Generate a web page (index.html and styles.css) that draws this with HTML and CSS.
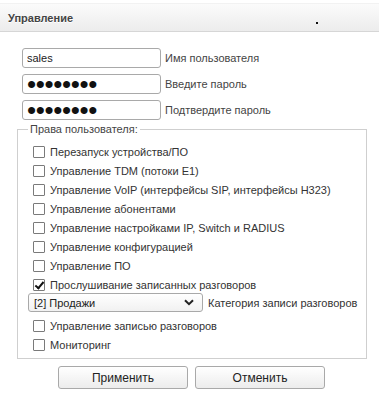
FILE: index.html
```html
<html>
  <head>
    <link rel="stylesheet" href="styles.css">
    <title>Управление</title>
  </head>
  <body>
    <div class="header">
      <span class="title">Управление</span>
      <span class="dot"></span>
    </div>
    <form class="form">
      <div class="field">
        <input class="text" type="text" value="sales">
        <label>Имя пользователя</label>
      </div>
      <div class="field">
        <input class="text" type="password" value="12345678">
        <label>Введите пароль</label>
      </div>
      <div class="field">
        <input class="text" type="password" value="12345678">
        <label>Подтвердите пароль</label>
      </div>

      <fieldset class="rights">
        <legend>Права пользователя:</legend>
        <label class="check"><input type="checkbox"> Перезапуск устройства/ПО</label>
        <label class="check"><input type="checkbox"> Управление TDM (потоки E1)</label>
        <label class="check"><input type="checkbox"> Управление VoIP (интерфейсы SIP, интерфейсы H323)</label>
        <label class="check"><input type="checkbox"> Управление абонентами</label>
        <label class="check"><input type="checkbox"> Управление настройками IP, Switch и RADIUS</label>
        <label class="check"><input type="checkbox"> Управление конфигурацией</label>
        <label class="check"><input type="checkbox"> Управление ПО</label>
        <label class="check"><input type="checkbox" checked> Прослушивание записанных разговоров</label>
        <div class="select-row">
          <span class="select-wrap">
            <select class="select">
              <option>[2] Продажи</option>
              <option>[1] Общая</option>
            </select>
            <svg class="chevron" width="10" height="7" viewBox="0 0 10 7">
              <path d="M1 1.2 L5 5.2 L9 1.2" fill="none" stroke="#222" stroke-width="2"/>
            </svg>
          </span>
          <span class="select-label">Категория записи разговоров</span>
        </div>
        <label class="check"><input type="checkbox"> Управление записью разговоров</label>
        <label class="check"><input type="checkbox"> Мониторинг</label>
      </fieldset>

      <div class="buttons">
        <button type="submit" class="btn">Применить</button>
        <button type="button" class="btn">Отменить</button>
      </div>
    </form>
  </body>
</html>
```

FILE: styles.css
```css
body {
  margin: 0;
  font-family: "Liberation Sans", Arial, sans-serif;
  font-size: 11px;
  color: #333;
}

.header {
  margin-top: 3px;
  height: 27px;
  display: flex;
  align-items: center;
  padding-left: 8px;
  background: linear-gradient(#fbfbfb, #ececec);
  border-top: 1px solid #f2f2f2;
  border-bottom: 1px solid #d6d6d6;
}
.title {
  font-weight: bold;
  color: #444;
  text-shadow: 0 1px 0 #fff;
}
.dot {
  width: 2px;
  height: 2px;
  background: #111;
  margin: 10px 0 0 243px;
}

.form {
  margin: 0;
  padding-top: 16px;
}

.field {
  display: flex;
  align-items: center;
  gap: 4px;
  margin: 0 0 6px 22px;
  color: #444;
}
.text {
  width: 139px;
  height: 20px;
  box-sizing: border-box;
  border: 1px solid #a9a9a9;
  border-radius: 3px;
  padding: 0 4px;
  font-family: "Liberation Sans", Arial, sans-serif;
  font-size: 11px;
  color: #222;
}
.text[type="password"] {
  font-size: 26px;
  letter-spacing: -0.35px;
  color: #111;
}

.rights {
  margin: -3px 12px 0 17px;
  padding: 7px 4px 4px 15px;
  border: 1px solid #cfcfcf;
}
.rights legend {
  margin-left: -5px;
  padding: 0 2px;
  color: #444;
}

.check {
  display: flex;
  align-items: center;
  gap: 5px;
  height: 19px;
}
.check input {
  appearance: none;
  width: 12px;
  height: 12px;
  margin: 0;
  border: 1px solid #7a7a7a;
  border-radius: 1px;
  background: #fff;
  position: relative;
  flex: none;
}
.check input:checked::after {
  content: "";
  position: absolute;
  left: 3px;
  top: 0;
  width: 3px;
  height: 7px;
  border: solid #111;
  border-width: 0 2px 2px 0;
  transform: rotate(40deg);
}

.select-row {
  display: flex;
  align-items: center;
  gap: 5px;
  height: 19px;
  margin: -1px 0 4px -5px;
}
.select-wrap {
  position: relative;
  display: flex;
  flex: none;
}
.select-label {
  white-space: nowrap;
}
.select {
  appearance: none;
  width: 175px;
  height: 19px;
  border: 1px solid #a9a9a9;
  border-radius: 3px;
  padding: 0 0 0 5px;
  background: linear-gradient(#ffffff, #f1f1f1);
  font-family: "Liberation Sans", Arial, sans-serif;
  font-size: 11px;
  color: #222;
}
.chevron {
  position: absolute;
  right: 9px;
  top: 6px;
  pointer-events: none;
}

.buttons {
  display: flex;
  gap: 7px;
  padding: 7px 0 0 58px;
}
.btn {
  width: 130px;
  height: 23px;
  border: 1px solid #a9a9a9;
  border-radius: 3px;
  background: linear-gradient(#ffffff, #ececec);
  font-family: "Liberation Sans", Arial, sans-serif;
  font-size: 12px;
  color: #222;
}
```
